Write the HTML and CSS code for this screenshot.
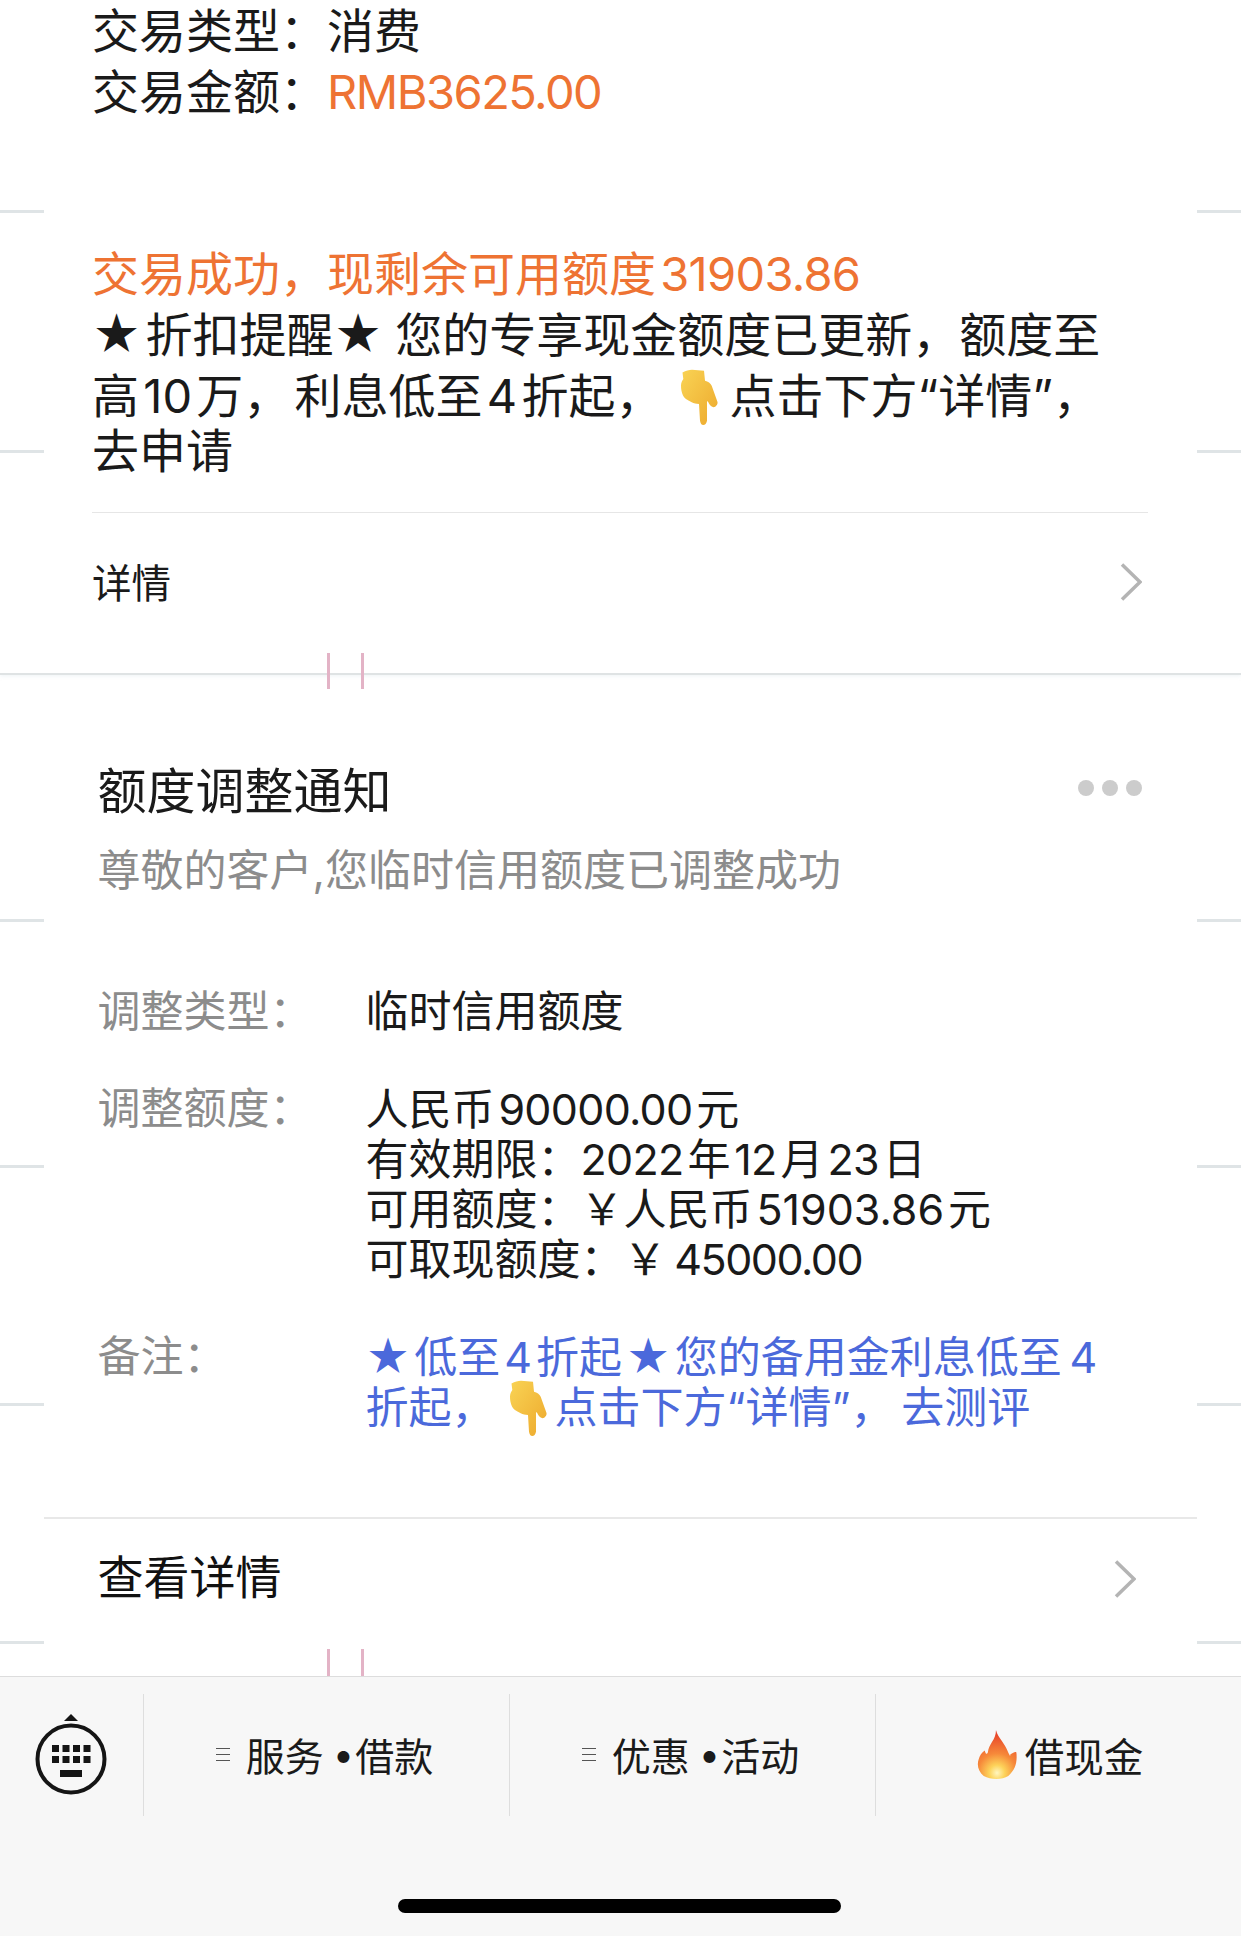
FILE: index.html
```html
<!DOCTYPE html>
<html lang="zh-CN">
<head>
    <meta charset="UTF-8">
    <meta name="viewport" content="width=device-width, initial-scale=1.0">
    <title>额度调整通知</title>
    <link rel="stylesheet" href="styles.css">
</head>
<body>
<div class="page">

    <!-- leftovers of the long screenshot behind the cards -->
    <div class="edge edge-a"></div>
    <div class="edge edge-b"></div>
    <div class="edge edge-c"></div>
    <div class="edge edge-d"></div>
    <div class="edge edge-e"></div>
    <div class="edge edge-f"></div>
    <div class="tick tick-mid tick-left"></div>
    <div class="tick tick-mid tick-right"></div>
    <div class="tick tick-low tick-left"></div>
    <div class="tick tick-low tick-right"></div>

    <!-- Payment message -->
    <section class="payment">
        <p class="field">交易类型&#xFF1A;消费</p>
        <p class="field">交易金额&#xFF1A;<span class="orange amount">RMB3625.00</span></p>

        <div class="notice">
            <p class="orange">交易成功&#xFF0C;现剩余可用额度&#8202;<span class="figure">31903.86</span></p>
            <p>★&#8202;折扣提醒★&#8201;&#8202;您的专享现金额度已更新&#xFF0C;额度至</p>
            <p>高&#8202;10&#8202;万&#xFF0C;&#8202;利息低至&#8202;4&#8202;折起&#xFF0C;<svg class="hand hand-black" viewBox="0 0 37 56"><use href="#hand-shape"/></svg>点击下方“详情”&#xFF0C;</p>
            <p class="notice-end">去申请</p>
        </div>

        <a class="detail-link">
            <span class="detail-text">详情</span>
            <svg class="chevron" viewBox="0 0 22 38"><path d="M2 1.5 20 19 2 36.5"/></svg>
        </a>
    </section>

    <!-- Limit adjustment message -->
    <section class="limit">
        <div class="limit-head">
            <h1>额度调整通知</h1>
            <div class="dots"><i></i><i></i><i></i></div>
        </div>
        <p class="limit-desc">尊敬的客户,您临时信用额度已调整成功</p>

        <div class="row row-first">
            <div class="row-label">调整类型&#xFF1A;</div>
            <div class="row-value">临时信用额度</div>
        </div>
        <div class="row row-second">
            <div class="row-label raised">调整额度&#xFF1A;</div>
            <div class="row-value">
                人民币&#8202;<span class="figure">90000.00</span>&#8202;元<br>
                有效期限&#xFF1A;<span class="figure">2022</span>&#8202;年&#8202;<span class="figure">12</span>&#8202;月&#8202;<span class="figure">23</span>&#8202;日<br>
                可用额度&#xFF1A;&#xFFE5;人民币&#8202;51903.86&#8202;元<br>
                可取现额度&#xFF1A;&#xFFE5;&#8201;<span class="amount">45000.00</span>
            </div>
        </div>
        <div class="row row-third">
            <div class="row-label raised">备注&#xFF1A;</div>
            <div class="row-value blue">
                ★&#8202;低至&#8202;4&#8202;折起&#8202;★&#8202;您的备用金利息低至&#8201;4<br>
                折起&#xFF0C;<svg class="hand hand-blue" viewBox="0 0 37 56"><use href="#hand-shape"/></svg>点击下方“详情”&#xFF0C;&#8201;去测评
            </div>
        </div>

        <a class="more-link">
            <span class="more-text">查看详情</span>
            <svg class="chevron" viewBox="0 0 22 38"><path d="M2 1.5 20 19 2 36.5"/></svg>
        </a>
    </section>

    <!-- Bottom menu -->
    <footer class="toolbar">
        <div class="menu">
            <div class="menu-keyboard">
                <svg class="keyboard" viewBox="0 0 72 90">
                    <path class="key" d="M36 0 43 7H29Z"/>
                    <circle class="ring" cx="36" cy="45" r="33.5"/>
                    <rect class="key" x="17" y="31" width="7" height="7"/>
                    <rect class="key" x="27.5" y="31" width="7" height="7"/>
                    <rect class="key" x="38" y="31" width="7" height="7"/>
                    <rect class="key" x="48.5" y="31" width="7" height="7"/>
                    <rect class="key" x="17" y="42" width="7" height="7"/>
                    <rect class="key" x="27.5" y="42" width="7" height="7"/>
                    <rect class="key" x="38" y="42" width="7" height="7"/>
                    <rect class="key" x="48.5" y="42" width="7" height="7"/>
                    <rect class="key" x="25" y="56" width="22" height="7"/>
                </svg>
            </div>
            <div class="menu-item menu-item-split">
                <span class="burger"><i></i><i></i><i></i></span>
                <span>服务</span><span class="bullet">•</span><span>借款</span>
            </div>
            <div class="menu-item menu-item-split">
                <span class="burger"><i></i><i></i><i></i></span>
                <span>优惠</span><span class="bullet">•</span><span>活动</span>
            </div>
            <div class="menu-item menu-item-cash">
                <svg class="fire" viewBox="0 0 38 48">
                    <defs>
                        <radialGradient id="flame" gradientUnits="userSpaceOnUse" cx="19" cy="42" r="38">
                            <stop offset="0" stop-color="#fff6c0"/>
                            <stop offset="0.2" stop-color="#fdd35a"/>
                            <stop offset="0.5" stop-color="#f6893a"/>
                            <stop offset="1" stop-color="#e8452a"/>
                        </radialGradient>
                    </defs>
                    <path fill="url(#flame)" d="M18 0C20 8 27 13 30 22C32 26 32 26 32 24C35 22 37 21 38 22C39 32 37 39 30 45C24 49 13 49 6 45C1 41-1 35 1 29C2 25 4 22 7 20C8 24 9 24 10 22C11 13 18 10 18 0Z"/>
                </svg>
                <span>借现金</span>
            </div>
        </div>
        <div class="home-bar"></div>
    </footer>

    <svg class="defs" width="0" height="0">
        <defs>
            <linearGradient id="hand-fill" x1="0" y1="0" x2="1" y2="1">
                <stop offset="0" stop-color="#f9d354"/>
                <stop offset="1" stop-color="#eda92d"/>
            </linearGradient>
            <path id="hand-shape" fill="url(#hand-fill)" d="M1.5 3.5C5 1.5 8 .7 11 .7L23 1.7 24 11.7C27 12.5 29.5 14 30.7 16.7L36.5 33C37 35 35 38 32.5 38.3 30 38 28 35 26.7 32L26 33V51.7C25.5 54.5 24 56 22.3 56 20.5 56 19.5 54.5 19 51.7L18 35C15 35 13 34.5 10.7 33.3 6 31 3 29 2 26.5 .5 23 0 20 0 16.7 0 14 1 12 2.3 10Z"/>
        </defs>
    </svg>
</div>
</body>
</html>
```

FILE: styles.css
```css
* {
    box-sizing: border-box;
}

body {
    margin: 0;
    padding: 0;
    background-color: #ffffff;
    font-family: Inter, "Noto Sans CJK SC", sans-serif;
    color: #1a1a1a;
}

p, h1 {
    margin: 0;
    font-weight: 400;
}

.page {
    position: relative;
    display: flex;
    flex-direction: column;
    width: 1241px;
    height: 1936px;
    overflow: hidden;
    background-color: #ffffff;
}

.orange {
    color: #ee7333;
}

.blue {
    color: #4b69db;
}

.figure {
    letter-spacing: -0.7px;
}

.amount {
    letter-spacing: -1.5px;
}

/* background lines */
.edge {
    position: absolute;
    left: 0;
    right: 0;
    height: 3px;
    background: linear-gradient(to right, #dfe4e6 44px, transparent 44px, transparent 1197px, #dfe4e6 1197px);
}

.edge-a { top: 210px; }
.edge-b { top: 450px; }
.edge-c { top: 919px; }
.edge-d { top: 1165px; }
.edge-e { top: 1403px; }
.edge-f { top: 1641px; }

.tick {
    position: absolute;
    width: 3px;
    background-color: #e3b3c6;
}

.tick-left { left: 327px; }
.tick-right { left: 361px; }
.tick-mid { top: 653px; height: 36px; }
.tick-low { top: 1649px; height: 27px; }

/* first message */
.payment {
    height: 675px;
    padding: 0 93px 0 92px;
    border-bottom: 2px solid #dfe3e4;
    box-shadow: 0 1px 4px rgba(205, 222, 228, 0.35);
    font-size: 47px;
}

.field {
    line-height: 61px;
}

.notice {
    margin-top: 121px;
    padding-bottom: 36px;
    border-bottom: 1px solid #e6e6e6;
    line-height: 61px;
}

.notice-end {
    line-height: 50px;
}

.hand {
    width: 37px;
    height: 56px;
    margin-top: -12px;
    margin-bottom: -6px;
    vertical-align: middle;
}

.hand-black {
    margin-left: 19px;
    margin-right: 11px;
}

.hand-blue {
    margin-left: 15px;
    margin-right: 8px;
}

.detail-link {
    display: flex;
    align-items: center;
    justify-content: space-between;
    height: 138px;
    font-size: 39.5px;
}

.detail-text {
    margin-top: -4px;
}

.detail-link .chevron {
    margin-right: 6px;
}

.chevron {
    width: 22px;
    height: 38px;
    fill: none;
    stroke: #b4b4b4;
    stroke-width: 3.5;
}

/* second message */
.limit {
    flex: 1;
    padding: 87px 0 0;
}

.limit-head {
    display: flex;
    align-items: center;
    justify-content: space-between;
    padding: 0 99px 0 97.5px;
    height: 60px;
}

.limit-head h1 {
    font-size: 49px;
    line-height: 60px;
}

.dots {
    display: flex;
    gap: 8px;
    margin-top: -9px;
}

.dots i {
    width: 16px;
    height: 16px;
    border-radius: 50%;
    background-color: #cccccc;
}

.limit-desc {
    margin-top: 23px;
    padding-left: 97.5px;
    font-size: 43px;
    line-height: 50px;
    color: #8c8c8c;
}

.row {
    display: flex;
    align-items: flex-start;
    padding-left: 97.5px;
    font-size: 43px;
    line-height: 50px;
}

.row-first { margin-top: 91px; }
.row-second { margin-top: 48px; }
.row-third { margin-top: 48px; }

.row-label {
    flex: 0 0 268px;
    color: #8c8c8c;
}

.row-label.raised {
    margin-top: -1px;
}

.more-link {
    display: flex;
    align-items: center;
    justify-content: space-between;
    height: 118px;
    margin: 85px 44px 0;
    padding: 0 62px 0 53.5px;
    border-top: 2px solid #e8e8e8;
    font-size: 46px;
    color: #111111;
}

.more-text {
    margin-top: -6px;
}

.more-link .chevron {
    margin-top: 4px;
    margin-right: -1px;
}

/* bottom menu */
.toolbar {
    height: 260px;
    padding-top: 17px;
    border-top: 1px solid #dddddd;
    background-color: #f7f7f7;
}

.menu {
    display: flex;
    height: 122px;
}

.menu-keyboard {
    display: flex;
    align-items: center;
    justify-content: center;
    flex: 0 0 141px;
    margin-right: 2px;
}

.keyboard {
    width: 72px;
    height: 90px;
    margin-top: 8px;
}

.key {
    fill: #151515;
}

.ring {
    fill: none;
    stroke: #151515;
    stroke-width: 4;
}

.menu-item {
    display: flex;
    align-items: center;
    justify-content: center;
    flex: 0 0 366px;
    padding-bottom: 2px;
    border-left: 1px solid #dedede;
    font-size: 39px;
    color: #1a1a1a;
}

.menu-item-split {
    padding-right: 4px;
}

.menu-item-cash {
    font-size: 39.5px;
}

.burger {
    display: flex;
    flex-direction: column;
    gap: 5px;
    width: 14px;
    margin-right: 16px;
}

.burger i {
    height: 1px;
    background-color: #555555;
}

.bullet {
    margin: 0 1px 0 9px;
    font-size: 38px;
}

.fire {
    width: 40px;
    height: 49px;
    margin: 0 8px 0 3px;
}

.home-bar {
    width: 443px;
    height: 14px;
    margin: 83px 0 0 398px;
    border-radius: 7px;
    background-color: #000000;
}

.defs {
    position: absolute;
}
```
